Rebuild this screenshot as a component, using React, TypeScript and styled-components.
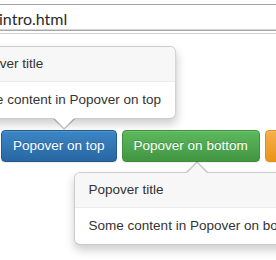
import * as React from "react";
import styled, { createGlobalStyle, css } from "styled-components";

const GlobalStyle = createGlobalStyle`
  html, body {
    margin: 0;
    padding: 0;
    background: #fff;
  }
  body {
    font-family: "Liberation Sans", Arial, sans-serif;
  }
`;

type Tone = "primary" | "success" | "warning";

const tones: Record<Tone, { from: string; to: string; border: string }> = {
  primary: { from: "#3c86c6", to: "#2866a3", border: "#245a8c" },
  success: { from: "#5db95d", to: "#419641", border: "#3e8f3e" },
  warning: { from: "#f4b04e", to: "#eb9316", border: "#e38d13" },
};

function App() {
  return (
    <>
      <GlobalStyle />
      <Page>
        <AddressBar>
          <Url>intro.html</Url>
        </AddressBar>
        <ButtonRow>
          <Anchor>
            <Button tone="primary">Popover on top</Button>
            <Popover placement="top">
              <PopoverTitle>Popover title</PopoverTitle>
              <PopoverContent>Some content in Popover on top</PopoverContent>
            </Popover>
          </Anchor>
          <Anchor>
            <Button tone="success">Popover on bottom</Button>
            <Popover placement="bottom">
              <PopoverTitle>Popover title</PopoverTitle>
              <PopoverContent>Some content in Popover on bottom</PopoverContent>
            </Popover>
          </Anchor>
          <Anchor>
            <Button tone="warning">Popover on left</Button>
          </Anchor>
        </ButtonRow>
      </Page>
    </>
  );
}

export default App;

const Page = styled.div`
  width: 276px;
  height: 260px;
  overflow: hidden;
  position: relative;
  background: #fff;
`;

const AddressBar = styled.div`
  margin-top: 4px;
  height: 24px;
  border-top: 1px solid #a3a3a3;
  border-bottom: 1px solid #d4d4d4;
  display: flex;
  align-items: center;
  box-shadow: 0 1px 0 #a8a8a8, 0 3px 0 #fff, 0 4px 0 #cfcfcf;
`;

const Url = styled.span`
  font-family: Lato, "Open Sans", sans-serif;
  font-size: 16px;
  color: #2a2a2a;
  margin-left: -1px;
  padding-top: 2px;
`;

const ButtonRow = styled.div`
  display: flex;
  gap: 5px;
  margin-top: 100px;
  padding-left: 1px;
  white-space: nowrap;
`;

const Anchor = styled.div`
  position: relative;
  flex: none;
`;

const Button = styled.button<{ tone: Tone }>`
  display: block;
  height: 32px;
  padding: 0 11px;
  font-family: "Liberation Sans", Arial, sans-serif;
  font-size: 13.5px;
  line-height: 30px;
  color: #fff;
  text-shadow: 0 -1px 0 rgba(0, 0, 0, 0.2);
  border-radius: 4px;
  border: 1px solid ${(p) => tones[p.tone].border};
  background: linear-gradient(
    to bottom,
    ${(p) => tones[p.tone].from} 0%,
    ${(p) => tones[p.tone].to} 100%
  );
  box-shadow: inset 0 1px 0 rgba(255, 255, 255, 0.15),
    0 1px 1px rgba(0, 0, 0, 0.075);
`;

const Popover = styled.div<{ placement: "top" | "bottom" }>`
  position: absolute;
  z-index: 2;
  background: #fff;
  border: 1px solid rgba(0, 0, 0, 0.2);
  border-radius: 6px;
  box-shadow: 0 5px 10px rgba(0, 0, 0, 0.2);
  font-size: 13.5px;
  color: #333;
  white-space: nowrap;

  &::before,
  &::after {
    content: "";
    position: absolute;
    width: 0;
    height: 0;
    border-style: solid;
    border-color: transparent;
  }

  ${(p) =>
    p.placement === "top"
      ? css`
          bottom: calc(100% + 11px);
          left: 175px;
          transform: translateX(-100%);

          &::before {
            right: 100px;
            bottom: -12px;
            border-width: 11px 11px 0;
            border-top-color: rgba(0, 0, 0, 0.22);
          }
          &::after {
            right: 101px;
            bottom: -10px;
            border-width: 10px 10px 0;
            border-top-color: #fff;
          }
        `
      : css`
          top: calc(100% + 10px);
          left: -48px;

          &::before {
            left: 111px;
            top: -12px;
            border-width: 0 11px 11px;
            border-bottom-color: rgba(0, 0, 0, 0.22);
          }
          &::after {
            left: 112px;
            top: -10px;
            border-width: 0 10px 10px;
            border-bottom-color: #f7f7f7;
          }
        `}
`;

const PopoverTitle = styled.h3`
  margin: 0;
  padding: 7px 14px 8px;
  font-size: 13.5px;
  font-weight: normal;
  line-height: 19px;
  background: #f7f7f7;
  border-bottom: 1px solid #ebebeb;
  border-radius: 5px 5px 0 0;
`;

const PopoverContent = styled.div`
  padding: 8px 14px 9px;
  line-height: 19px;
`;
